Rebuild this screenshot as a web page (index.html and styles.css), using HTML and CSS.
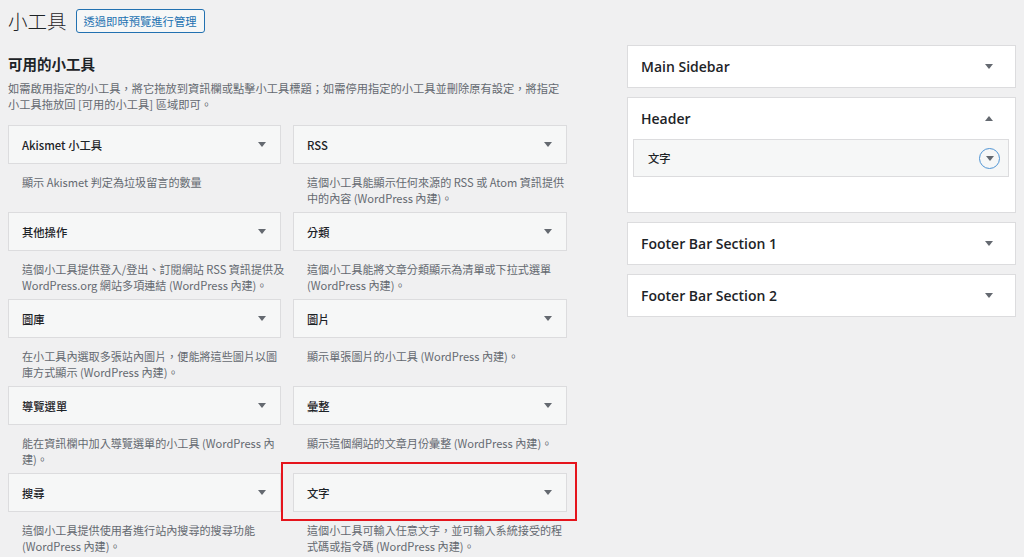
FILE: index.html
```html
<!DOCTYPE html>
<html lang="zh-Hant">
<head>
<meta charset="utf-8">
<title>小工具</title>
<link rel="stylesheet" href="styles.css">
</head>
<body>
<div class="page">
  <div class="titlebar">
    <h1 class="page-title">小工具</h1>
    <a class="btn-preview">透過即時預覽進行管理</a>
  </div>
  <div class="columns">
    <div class="available">
      <h2 class="section-title">可用的小工具</h2>
      <p class="section-desc">如需啟用指定的小工具，將它拖放到資訊欄或點擊小工具標題；如需停用指定的小工具並刪除原有設定，將指定<br>小工具拖放回 [可用的小工具] 區域即可。</p>
      <div class="widget-grid">
        <div class="widget">
          <div class="widget-top"><span class="widget-name">Akismet 小工具</span><span class="arrow-down"></span></div>
          <p class="widget-desc">顯示 Akismet 判定為垃圾留言的數量</p>
        </div>
        <div class="widget">
          <div class="widget-top"><span class="widget-name">RSS</span><span class="arrow-down"></span></div>
          <p class="widget-desc">這個小工具能顯示任何來源的 RSS 或 Atom 資訊提供<br>中的內容 (WordPress 內建)。</p>
        </div>
        <div class="widget">
          <div class="widget-top"><span class="widget-name">其他操作</span><span class="arrow-down"></span></div>
          <p class="widget-desc">這個小工具提供登入/登出、訂閱網站 RSS 資訊提供及<br>WordPress.org 網站多項連結 (WordPress 內建)。</p>
        </div>
        <div class="widget">
          <div class="widget-top"><span class="widget-name">分類</span><span class="arrow-down"></span></div>
          <p class="widget-desc">這個小工具能將文章分類顯示為清單或下拉式選單<br>(WordPress 內建)。</p>
        </div>
        <div class="widget">
          <div class="widget-top"><span class="widget-name">圖庫</span><span class="arrow-down"></span></div>
          <p class="widget-desc">在小工具內選取多張站內圖片，便能將這些圖片以圖<br>庫方式顯示 (WordPress 內建)。</p>
        </div>
        <div class="widget">
          <div class="widget-top"><span class="widget-name">圖片</span><span class="arrow-down"></span></div>
          <p class="widget-desc">顯示單張圖片的小工具 (WordPress 內建)。</p>
        </div>
        <div class="widget">
          <div class="widget-top"><span class="widget-name">導覽選單</span><span class="arrow-down"></span></div>
          <p class="widget-desc">能在資訊欄中加入導覽選單的小工具 (WordPress 內<br>建)。</p>
        </div>
        <div class="widget">
          <div class="widget-top"><span class="widget-name">彙整</span><span class="arrow-down"></span></div>
          <p class="widget-desc">顯示這個網站的文章月份彙整 (WordPress 內建)。</p>
        </div>
        <div class="widget">
          <div class="widget-top"><span class="widget-name">搜尋</span><span class="arrow-down"></span></div>
          <p class="widget-desc">這個小工具提供使用者進行站內搜尋的搜尋功能<br>(WordPress 內建)。</p>
        </div>
        <div class="widget highlighted">
          <div class="widget-top"><span class="widget-name">文字</span><span class="arrow-down"></span></div>
          <p class="widget-desc">這個小工具可輸入任意文字，並可輸入系統接受的程<br>式碼或指令碼 (WordPress 內建)。</p>
          <div class="highlight-box"></div>
        </div>
      </div>
    </div>
    <div class="sidebars">
      <div class="sidebar">
        <div class="sidebar-head"><span class="sidebar-name">Main Sidebar</span><span class="arrow-down"></span></div>
      </div>
      <div class="sidebar open">
        <div class="sidebar-head"><span class="sidebar-name">Header</span><span class="arrow-up"></span></div>
        <div class="sidebar-body">
          <div class="placed-widget">
            <span class="widget-name">文字</span>
            <span class="toggle-circle"><span class="arrow-down"></span></span>
          </div>
        </div>
      </div>
      <div class="sidebar">
        <div class="sidebar-head"><span class="sidebar-name">Footer Bar Section 1</span><span class="arrow-down"></span></div>
      </div>
      <div class="sidebar">
        <div class="sidebar-head"><span class="sidebar-name">Footer Bar Section 2</span><span class="arrow-down"></span></div>
      </div>
    </div>
  </div>
</div>
</body>
</html>
```

FILE: styles.css
```css
* { box-sizing: border-box; }
html, body { margin: 0; padding: 0; }
body {
  background: #f0f0f1;
  color: #1d2327;
  font-family: "Noto Sans CJK TC", sans-serif;
  width: 1024px;
  height: 557px;
  overflow: hidden;
}
.page { padding: 0 0 0 8px; }

.titlebar {
  display: flex;
  align-items: center;
  gap: 9px;
  padding-top: 9px;
  height: 32px;
}
.page-title {
  margin: 0;
  font-size: 19.5px;
  font-weight: 300;
  line-height: 23px;
  color: #1d2327;
}
.btn-preview {
  display: inline-flex;
  align-items: center;
  height: 24px;
  padding: 0 7px;
  border: 1px solid #2271b1;
  border-radius: 3px;
  background: #f6f7f7;
  color: #2271b1;
  font-size: 11.3px;
}

.columns {
  display: flex;
  gap: 60px;
  margin-top: 13px;
}

.available { width: 559px; }
.section-title {
  margin: 9px 0 0;
  font-size: 14.5px;
  line-height: 19px;
  font-weight: 700;
}
.section-desc {
  margin: 7px 0 0;
  font-size: 11.25px;
  line-height: 16px;
  color: #646970;
  white-space: nowrap;
}

.widget-grid {
  margin-top: 13px;
  display: grid;
  grid-template-columns: 273px 274px;
  column-gap: 12px;
  grid-auto-rows: 81px;
  row-gap: 6px;
}
.widget { position: relative; }
.widget-top {
  height: 39px;
  display: flex;
  align-items: center;
  justify-content: space-between;
  padding: 0 14px 0 13px;
  background: #f6f7f7;
  border: 1px solid #dcdcde;
}
.widget-name {
  font-size: 11.3px;
  font-weight: 500;
  color: #1d2327;
}
.widget-desc {
  margin: 10px 0 0;
  padding: 0 0 0 14px;
  font-size: 11.1px;
  line-height: 16px;
  color: #646970;
  white-space: nowrap;
}

.arrow-down, .arrow-up {
  display: inline-block;
  width: 0;
  height: 0;
  border-left: 4px solid transparent;
  border-right: 4px solid transparent;
}
.arrow-down { border-top: 5px solid #646970; }
.arrow-up { border-bottom: 5px solid #646970; }

.highlight-box {
  position: absolute;
  left: -12px;
  top: -11px;
  width: 296px;
  height: 59px;
  border: 2px solid #e5141c;
}

.sidebars {
  width: 389px;
  display: flex;
  flex-direction: column;
  gap: 9px;
}
.sidebar {
  background: #fff;
  border: 1px solid #dcdcde;
}
.sidebar-head {
  height: 41px;
  display: flex;
  align-items: center;
  justify-content: space-between;
  padding: 0 22px 0 13px;
}
.sidebar-name {
  font-family: "Open Sans", sans-serif;
  font-size: 14px;
  font-weight: 600;
  color: #1d2327;
}
.sidebar-body {
  padding: 0 6px 35px 5px;
}
.placed-widget {
  height: 38px;
  display: flex;
  align-items: center;
  justify-content: space-between;
  padding: 0 8px 0 14px;
  background: #f6f7f7;
  border: 1px solid #dcdcde;
}
.toggle-circle {
  width: 21px;
  height: 21px;
  border-radius: 50%;
  border: 1.5px solid #4f94d4;
  display: flex;
  align-items: center;
  justify-content: center;
  padding-top: 1px;
}
```
